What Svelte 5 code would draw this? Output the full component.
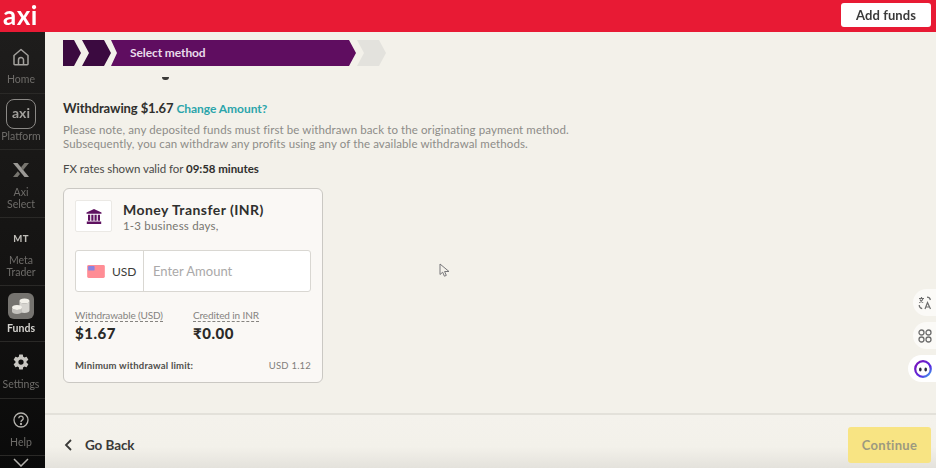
<script lang="ts">
  const nav = [
    { id: "home", label: ["Home"], h: 62 },
    { id: "platform", label: ["Platform"], h: 56 },
    { id: "select", label: ["Axi", "Select"], h: 68 },
    { id: "mt", label: ["Meta", "Trader"], h: 68 },
    { id: "funds", label: ["Funds"], h: 56, active: true },
    { id: "settings", label: ["Settings"], h: 57 },
    { id: "help", label: ["Help"], h: 57 },
  ];
</script>

<div class="page">
  <header class="topbar">
    <span class="logo">axi</span>
    <button class="add-funds">Add funds</button>
  </header>

  <div class="body">
    <nav class="sidebar">
      {#each nav as item}
        <div class="nav-item {item.id}" class:active={item.active} style="height: {item.h}px">
          <div class="nav-icon">
            {#if item.id === "home"}
              <svg width="16" height="18" viewBox="0 0 16 18" fill="none" stroke="#a3a19d" stroke-width="1.5">
                <path d="M1 7.5 8 1.5l7 6V16a.8.8 0 0 1-.8.8H1.800A.8.8 0 0 1 1 16Z" stroke-linejoin="round" />
                <path d="M5.500 16.500V12a2.500 2.500 0 0 1 5 0v4.500" />
              </svg>
            {:else if item.id === "platform"}
              <div class="platform-box">axi</div>
            {:else if item.id === "select"}
              <svg width="16" height="14" viewBox="0 0 16 14">
                <path d="M0 0h4.500L16 14h-4.500Z" fill="#9b9995" />
                <path d="M16 0h-4.500L8 4.300l2.200 2.700ZM0 14h4.500L7 10.900 4.800 8.200Z" fill="#77756f" />
              </svg>
            {:else if item.id === "mt"}
              <span class="mt-mark">MT</span>
            {:else if item.id === "funds"}
              <div class="funds-box">
                <svg width="20" height="19" viewBox="0 0 20 19">
                  <ellipse cx="13.500" cy="4" rx="5" ry="2.500" fill="#f3f1ea" />
                  <path d="M8.500 4v9.500c0 1.400 2.200 2.500 5 2.500s5-1.100 5-2.500V4c0 1.400-2.200 2.500-5 2.500S8.500 5.400 8.500 4Z" fill="#d6d4cf" />
                  <ellipse cx="6" cy="10.500" rx="5" ry="2.500" fill="#f3f1ea" />
                  <path d="M1 10.500v4c0 1.400 2.200 2.500 5 2.500s5-1.100 5-2.500v-4c0 1.400-2.200 2.500-5 2.500s-5-1.100-5-2.500Z" fill="#c4c2bd" />
                </svg>
              </div>
            {:else if item.id === "settings"}
              <svg width="18" height="18" viewBox="0 0 24 24" fill="#c8c6c1">
                <path d="M19.430 12.980a7.800 7.800 0 0 0 0-1.960l2.110-1.650a.5.5 0 0 0 .12-.64l-2-3.460a.5.5 0 0 0-.61-.22l-2.490 1a7.300 7.300 0 0 0-1.690-.98l-.38-2.650A.49.490 0 0 0 14 2h-4a.49.490 0 0 0-.49.420l-.38 2.650a7.700 7.700 0 0 0-1.690.98l-2.490-1a.5.5 0 0 0-.61.220l-2 3.460a.49.490 0 0 0 .12.640l2.110 1.650a7.900 7.900 0 0 0 0 1.960l-2.110 1.650a.5.5 0 0 0-.12.640l2 3.460a.5.5 0 0 0 .61.220l2.490-1c.52.400 1.080.730 1.690.980l.38 2.650c.03.240.24.420.49.420h4c.25 0 .46-.18.490-.420l.38-2.650a7.700 7.700 0 0 0 1.690-.98l2.490 1a.5.5 0 0 0 .61-.22l2-3.460a.5.5 0 0 0-.12-.64ZM12 15.500a3.500 3.500 0 1 1 0-7 3.500 3.500 0 0 1 0 7Z" />
              </svg>
            {:else if item.id === "help"}
              <svg width="16" height="16" viewBox="0 0 16 16" fill="none" stroke="#b5b3ae" stroke-width="1.300">
                <circle cx="8" cy="8" r="7" />
                <path d="M5.800 6.200a2.200 2.200 0 1 1 3.400 1.900c-.8.500-1.200.9-1.200 1.800" />
                <circle cx="8" cy="12" r=".5" fill="#b5b3ae" />
              </svg>
            {/if}
          </div>
          <div class="nav-label">
            {#each item.label as line}<div>{line}</div>{/each}
          </div>
        </div>
      {/each}
      <svg class="nav-more" width="16" height="9" viewBox="0 0 16 9" fill="none" stroke="#b5b3ae" stroke-width="1.500">
        <path d="M1 1l7 7 7-7" />
      </svg>
    </nav>

    <main class="main">
      <div class="content">
        <div class="stepper">
          <div class="step first"></div>
          <div class="step second"></div>
          <div class="step current">Select method</div>
          <div class="step next"></div>
        </div>
        <div class="cut-heading"></div>

        <p class="withdrawing">Withdrawing $1.67 <a href="#change">Change Amount?</a></p>
        <p class="note">
          Please note, any deposited funds must first be withdrawn back to the originating payment method.<br />
          Subsequently, you can withdraw any profits using any of the available withdrawal methods.
        </p>
        <p class="fx">FX rates shown valid for <b>09:58 minutes</b></p>

        <section class="card">
          <div class="method">
            <div class="bank">
              <svg width="16" height="15" viewBox="0 0 16 15" fill="#5e1160">
                <path d="M8 0 15.500 3.400V4.800H.5V3.400Z" />
                <path d="M2 5.800h2.200v6H2ZM5.300 5.800h2.200v6H5.300ZM8.500 5.800h2.200v6H8.500ZM11.800 5.800H14v6h-2.200ZM.8 12.600h14.400V15H.8Z" />
              </svg>
            </div>
            <div>
              <div class="method-name">Money Transfer (INR)</div>
              <div class="method-time">1-3 business days,</div>
            </div>
          </div>

          <div class="amount">
            <div class="currency">
              <svg width="18" height="13" viewBox="0 0 19 14">
                <rect width="19" height="14" rx="1.500" fill="#ff8d95" />
                <rect x="1" y="1" width="7" height="5" rx="1" fill="#8a83e0" />
              </svg>
              <span>USD</span>
            </div>
            <div class="placeholder">Enter Amount</div>
          </div>

          <div class="figures">
            <div class="figure">
              <span class="fig-label">Withdrawable (USD)</span>
              <div class="fig-value">$1.67</div>
            </div>
            <div class="figure">
              <span class="fig-label">Credited in INR</span>
              <div class="fig-value">₹0.00</div>
            </div>
          </div>

          <div class="limit">
            <b>Minimum withdrawal limit:</b>
            <span>USD 1.12</span>
          </div>
        </section>
      </div>

      <footer class="footer">
        <div class="back">
          <svg width="8" height="12" viewBox="0 0 8 12" fill="none" stroke="#3a3a38" stroke-width="1.800">
            <path d="M7 1 2 6l5 5" />
          </svg>
          <span>Go Back</span>
        </div>
        <button class="continue">Continue</button>
      </footer>

      <!-- floating helpers over the right edge -->
      <div class="floats">
        <div class="float">
          <svg width="14" height="14" viewBox="0 0 14 14" fill="none" stroke="#6d6d6d" stroke-width="1.200">
            <path d="M1 2.500h5M3.500 1v1.500M5 2.500C4.600 4.500 3 6 1.300 6.700M2 3.500c.5 1.300 1.700 2.500 3.200 3" />
            <path d="M7 13l2.500-6.500L12.500 13M8 11h3.500" />
            <path d="M9 1.200c1.800 0 3 1 3.400 2.800M1.200 9c0 1.800 1.200 3.300 3 3.600" />
          </svg>
        </div>
        <div class="float">
          <svg width="14" height="14" viewBox="0 0 14 14" fill="none" stroke="#6d6d6d" stroke-width="1.300">
            <rect x="1" y="1" width="5" height="5" rx="2.500" />
            <rect x="8" y="1" width="5" height="5" rx="2.500" />
            <rect x="1" y="8" width="5" height="5" rx="2.500" />
            <rect x="8" y="8" width="5" height="5" rx="2.500" />
          </svg>
        </div>
        <div class="float wide">
          <svg width="18" height="18" viewBox="0 0 18 18">
            <defs>
              <linearGradient id="ring" x1="0" y1="0" x2="1" y2="1">
                <stop offset="0" stop-color="#7a12b8" />
                <stop offset=".65" stop-color="#5a2be0" />
                <stop offset="1" stop-color="#35b4f0" />
              </linearGradient>
            </defs>
            <circle cx="9" cy="9" r="7.800" fill="#fff" stroke="url(#ring)" stroke-width="2.200" />
            <ellipse cx="6.300" cy="9.500" rx="1.300" ry="1.900" fill="#2a2a3a" />
            <ellipse cx="11.700" cy="9.500" rx="1.300" ry="1.900" fill="#2a2a3a" />
          </svg>
        </div>
      </div>

      <svg class="cursor" width="11" height="14" viewBox="0 0 11 14" fill="#f3f1ea" stroke="#77777a" stroke-width="1">
        <path d="M1 1v10.500l2.700-2.300 1.700 4 1.900-.8-1.700-3.900H10Z" />
      </svg>
    </main>
  </div>
</div>

<style>
  :global(body) {
    background: #f3f1ea;
  }

  .page {
    width: 936px;
    height: 468px;
    overflow: hidden;
    display: flex;
    flex-direction: column;
    font-family: Lato, "Open Sans", sans-serif;
    color: #2f2f2d;
    filter: blur(0.5px);
  }

  .topbar {
    height: 32px;
    flex: none;
    background: #e81a34;
    display: flex;
    align-items: center;
    justify-content: space-between;
    padding: 0 5px 0 3px;
  }

  .logo {
    color: #fff;
    font-size: 26px;
    font-weight: 700;
    line-height: 26px;
    letter-spacing: 0.5px;
    margin-top: -2px;
  }

  .add-funds {
    width: 90px;
    height: 24px;
    margin-top: -2px;
    border: none;
    border-radius: 3px;
    background: #fff;
    color: #3a3a3a;
    font: 700 13px Lato, sans-serif;
    letter-spacing: 0.1px;
  }

  .body {
    flex: 1;
    display: flex;
    min-height: 0;
  }

  .sidebar {
    width: 45px;
    flex: none;
    background: linear-gradient(#1e1d1c, #151413 50%, #0a0a0a);
    display: flex;
    flex-direction: column;
    align-items: center;
  }

  .nav-item {
    width: 100%;
    flex: none;
    box-sizing: border-box;
    border-bottom: 1px solid #2a2927;
    display: flex;
    flex-direction: column;
    align-items: center;
    padding: 10px 3px 0 0;
  }

  .nav-icon {
    height: 20px;
    display: flex;
    align-items: center;
    justify-content: center;
  }

  .nav-label {
    margin-top: 6px;
    color: #6e6c69;
    font-size: 10.5px;
    line-height: 12px;
    text-align: center;
    white-space: nowrap;
  }

  .nav-item.active .nav-label {
    color: #d5d3cf;
    font-weight: 700;
  }

  .nav-item.home {
    padding-top: 15px;
  }

  .nav-item.platform {
    padding-top: 5px;
  }

  .nav-item.platform .nav-icon {
    height: 30px;
  }

  .nav-item.platform .nav-label {
    margin-top: 1px;
  }

  .nav-item.funds {
    padding-top: 7px;
  }

  .nav-item.funds .nav-icon {
    height: 26px;
  }

  .nav-item.funds .nav-label {
    margin-top: 3px;
  }

  .nav-item.help {
    padding-top: 11px;
  }

  .platform-box {
    box-sizing: border-box;
    width: 30px;
    height: 30px;
    border: 1.5px solid #8b8986;
    border-radius: 8px;
    color: #a19f9b;
    font-size: 14px;
    font-weight: 700;
    line-height: 26px;
    text-align: center;
  }

  .mt-mark {
    color: #bdbbb6;
    font-size: 9.5px;
    font-weight: 900;
    letter-spacing: 0.3px;
  }

  .funds-box {
    width: 26px;
    height: 26px;
    border-radius: 6px;
    background: #75736f;
    display: flex;
    align-items: center;
    justify-content: center;
  }

  .nav-more {
    margin: 2px 3px 0 0;
    flex: none;
  }

  .main {
    flex: 1;
    position: relative;
    display: flex;
    flex-direction: column;
    min-width: 0;
    background: #f3f1ea;
  }

  .content {
    flex: 1;
    padding: 8px 0 0 18px;
    min-height: 0;
  }

  .stepper {
    display: flex;
    height: 26px;
  }

  .step {
    height: 26px;
    box-sizing: border-box;
    flex: none;
  }

  .first {
    width: 18px;
    background: #3b0a40;
    clip-path: polygon(0 0, 11px 0, 100% 50%, 11px 100%, 0 100%);
  }

  .second {
    width: 29px;
    margin-left: 1px;
    background: #3b0a40;
    clip-path: polygon(0 0, 22px 0, 100% 50%, 22px 100%, 0 100%, 7px 50%);
  }

  .current {
    width: 245px;
    padding-left: 19px;
    background: #5f0d60;
    color: #e9dcea;
    font-size: 12px;
    font-weight: 700;
    line-height: 26px;
    letter-spacing: -0.1px;
    clip-path: polygon(0 0, 238px 0, 100% 50%, 238px 100%, 0 100%, 6px 50%);
  }

  .next {
    width: 29px;
    margin-left: 1px;
    background: #e3e2dd;
    clip-path: polygon(0 0, 22px 0, 100% 50%, 22px 100%, 0 100%, 7px 50%);
  }

  .cut-heading {
    width: 7px;
    height: 3px;
    margin: 11px 0 0 99px;
    border-radius: 0 0 4px 4px;
    background: #3a3a38;
  }

  p {
    margin: 0;
  }

  .withdrawing {
    margin-top: 20px;
    font-size: 13px;
    font-weight: 700;
    line-height: 16px;
    letter-spacing: -0.1px;
  }

  .withdrawing a {
    color: #2ba5ab;
    font-size: 12px;
    text-decoration: none;
    letter-spacing: -0.05px;
  }

  .note {
    margin-top: 6px;
    color: #8d8c88;
    font-size: 11.500px;
    line-height: 13.500px;
    letter-spacing: 0.1px;
  }

  .fx {
    margin-top: 12px;
    color: #4a4a47;
    font-size: 11.500px;
    line-height: 14px;
    letter-spacing: -0.05px;
  }

  .fx b {
    color: #2f2f2d;
  }

  .card {
    box-sizing: border-box;
    width: 260px;
    height: 195px;
    margin-top: 12px;
    padding: 11px 11px 0;
    background: #faf8f5;
    border: 1px solid #cac8c3;
    border-radius: 6px;
  }

  .method {
    display: flex;
    gap: 11px;
    height: 32px;
  }

  .bank {
    width: 37px;
    height: 32px;
    box-sizing: border-box;
    background: #fff;
    border: 1px solid #ebe9e5;
    border-radius: 2px;
    display: flex;
    align-items: center;
    justify-content: center;
  }

  .method-name {
    margin-top: 1px;
    font-size: 14px;
    font-weight: 700;
    line-height: 18px;
    letter-spacing: 0.45px;
  }

  .method-time {
    color: #77756f;
    font-size: 11.500px;
    line-height: 14px;
    letter-spacing: 0.2px;
  }

  .amount {
    box-sizing: border-box;
    width: 236px;
    height: 42px;
    margin-top: 18px;
    display: flex;
    background: #fff;
    border: 1px solid #d9d7d2;
    border-radius: 3px;
  }

  .currency {
    box-sizing: border-box;
    width: 68px;
    border-right: 1px solid #d9d7d2;
    padding-left: 11px;
    display: flex;
    align-items: center;
    gap: 7px;
    color: #3c3c3a;
    font-size: 12px;
  }

  .placeholder {
    padding-left: 9px;
    color: #aaa9a9;
    font-size: 13px;
    line-height: 40px;
  }

  .figures {
    display: flex;
    margin-top: 11px;
  }

  .figure {
    width: 118px;
  }

  .fig-label {
    color: #85837f;
    font-size: 10px;
    line-height: 12px;
    display: inline-block;
    border-bottom: 1px dashed #85837f;
    letter-spacing: -0.12px;
  }

  .fig-value {
    margin-top: 2px;
    color: #2a2a28;
    font-size: 15px;
    font-weight: 900;
    line-height: 19px;
    letter-spacing: 0.5px;
  }

  .limit {
    display: flex;
    justify-content: space-between;
    width: 236px;
    margin-top: 17px;
    color: #4f4e4b;
    font-size: 9.500px;
    line-height: 12px;
    letter-spacing: 0.2px;
  }

  .limit span {
    color: #807e7a;
  }

  .footer {
    height: 55px;
    flex: none;
    box-sizing: border-box;
    padding: 12px 5px 6px 19px;
    border-top: 2px solid #e3e1da;
    background: linear-gradient(#f4f2ec, #f3f1ea 60%, #e4e2dc);
    display: flex;
    align-items: center;
    justify-content: space-between;
  }

  .back {
    display: flex;
    align-items: center;
    gap: 13px;
    font-size: 13.500px;
    font-weight: 700;
    letter-spacing: -0.1px;
    color: #3a3a38;
  }

  .continue {
    width: 83px;
    height: 36px;
    border: none;
    border-radius: 3px;
    background: #f8e483;
    color: #9c9a80;
    font: 700 13px Lato, sans-serif;
    letter-spacing: 0.3px;
  }

  .floats {
    position: absolute;
    right: 0;
    top: 257px;
    display: flex;
    flex-direction: column;
    align-items: flex-end;
    gap: 6px;
  }

  .float {
    box-sizing: border-box;
    width: 23px;
    height: 27px;
    border-radius: 14px 0 0 14px;
    background: #fbfaf7;
    display: flex;
    align-items: center;
    padding-left: 5px;
  }

  .float.wide {
    width: 28px;
    padding-left: 6px;
    background: #fff;
  }

  .cursor {
    position: absolute;
    left: 394px;
    top: 231px;
  }
</style>
